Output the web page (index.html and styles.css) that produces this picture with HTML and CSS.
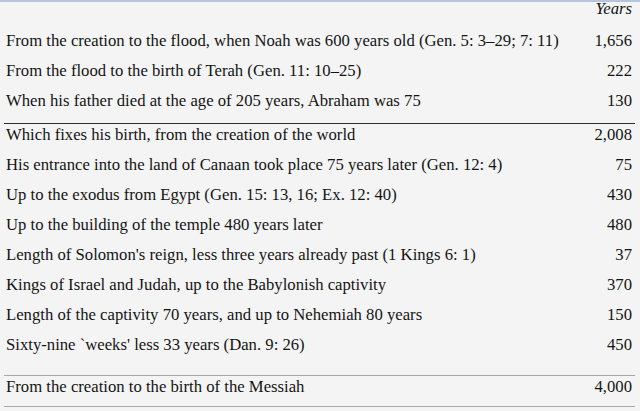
FILE: index.html
```html
<!DOCTYPE html>
<html>
<head>
<meta charset="utf-8">
<link rel="stylesheet" href="styles.css">
</head>
<body>
<table class="chron">
  <thead>
    <tr><th class="label"></th><th class="num yrs">Years</th></tr>
  </thead>
  <tbody>
    <tr><td class="label">From the creation to the flood, when Noah was 600 years old (Gen. 5: 3–29; 7: 11)</td><td class="num">1,656</td></tr>
    <tr><td class="label">From the flood to the birth of Terah (Gen. 11: 10–25)</td><td class="num">222</td></tr>
    <tr class="grp-end"><td class="label">When his father died at the age of 205 years, Abraham was 75</td><td class="num">130</td></tr>
  </tbody>
  <tbody>
    <tr class="sum"><td class="label">Which fixes his birth, from the creation of the world</td><td class="num">2,008</td></tr>
    <tr><td class="label">His entrance into the land of Canaan took place 75 years later (Gen. 12: 4)</td><td class="num">75</td></tr>
    <tr><td class="label">Up to the exodus from Egypt (Gen. 15: 13, 16; Ex. 12: 40)</td><td class="num">430</td></tr>
    <tr><td class="label">Up to the building of the temple 480 years later</td><td class="num">480</td></tr>
    <tr><td class="label">Length of Solomon's reign, less three years already past (1 Kings 6: 1)</td><td class="num">37</td></tr>
    <tr><td class="label">Kings of Israel and Judah, up to the Babylonish captivity</td><td class="num">370</td></tr>
    <tr><td class="label">Length of the captivity 70 years, and up to Nehemiah 80 years</td><td class="num">150</td></tr>
    <tr class="last"><td class="label">Sixty-nine `weeks' less 33 years (Dan. 9: 26)</td><td class="num">450</td></tr>
  </tbody>
  <tbody>
    <tr class="total"><td class="label">From the creation to the birth of the Messiah</td><td class="num">4,000</td></tr>
  </tbody>
</table>
</body>
</html>
```
FILE: styles.css
```css
html, body {
  margin: 0;
  padding: 0;
}
body {
  background: #f4f4f4;
  border-top: 2px solid #b7c4d8;
  font-family: "Liberation Serif", "Times New Roman", serif;
  font-size: 16.7px;
  color: #141414;
}
.chron {
  border-collapse: separate;
  border-spacing: 0;
  width: 631px;
  margin-left: 4px;
}
.chron th,
.chron td {
  padding: 1px 3px 9px 2px;
  line-height: 20px;
  white-space: nowrap;
  vertical-align: top;
}
.chron th {
  font-weight: normal;
  line-height: 14px;
  padding-top: 0;
  padding-bottom: 14px;
}
.label {
  text-align: left;
}
.num {
  text-align: right;
}
.yrs {
  font-style: italic;
}
.grp-end td {
  padding-bottom: 12px;
}
.sum td {
  border-top: 1px solid #2e2e2e;
}
.last td {
  padding-bottom: 20px;
}
.total td {
  border-top: 1px solid #a8a8a8;
  border-bottom: 1px solid #a8a8a8;
}
```
